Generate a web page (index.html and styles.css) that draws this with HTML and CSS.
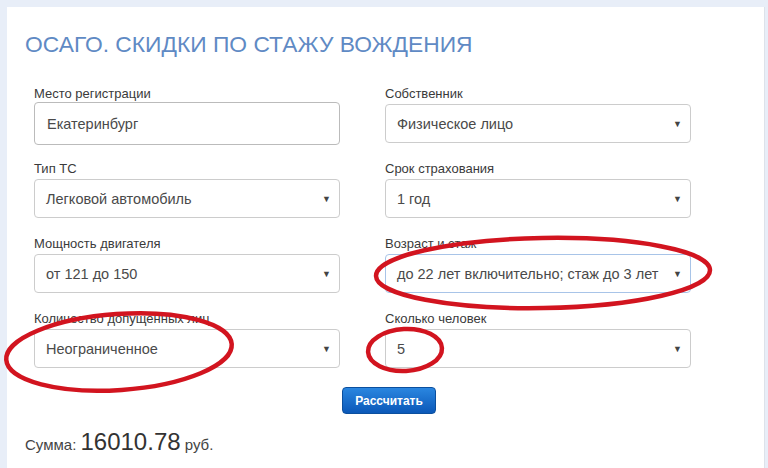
FILE: index.html
```html
<!DOCTYPE html>
<html lang="ru">

<head>
    <meta charset="UTF-8">
    <meta name="viewport" content="width=device-width, initial-scale=1.0">
    <title>ОСАГО</title>
    <link rel="stylesheet" href="styles.css">
</head>

<body>
    <div class="page">
        <div class="card">
            <h1 class="title">ОСАГО. СКИДКИ ПО СТАЖУ ВОЖДЕНИЯ</h1>

            <div class="form">
                <div class="field">
                    <div class="label">Место регистрации</div>
                    <div class="control text">Екатеринбург</div>
                </div>
                <div class="field">
                    <div class="label">Собственник</div>
                    <div class="control"><span>Физическое лицо</span><span class="arrow">▼</span></div>
                </div>
                <div class="field">
                    <div class="label">Тип ТС</div>
                    <div class="control"><span>Легковой автомобиль</span><span class="arrow">▼</span></div>
                </div>
                <div class="field">
                    <div class="label">Срок страхования</div>
                    <div class="control"><span>1 год</span><span class="arrow">▼</span></div>
                </div>
                <div class="field">
                    <div class="label">Мощность двигателя</div>
                    <div class="control"><span>от 121 до 150</span><span class="arrow">▼</span></div>
                </div>
                <div class="field">
                    <div class="label">Возраст и стаж</div>
                    <div class="control focus"><span>до 22 лет включительно; стаж до 3 лет</span><span class="arrow">▼</span></div>
                </div>
                <div class="field">
                    <div class="label">Количество допущенных лиц</div>
                    <div class="control"><span>Неограниченное</span><span class="arrow">▼</span></div>
                </div>
                <div class="field">
                    <div class="label">Сколько человек</div>
                    <div class="control"><span>5</span><span class="arrow">▼</span></div>
                </div>
            </div>

            <div class="actions">
                <button class="calc">Рассчитать</button>
            </div>

            <div class="sum">Сумма: <span class="amount">16010.78</span> руб.</div>
        </div>
    </div>

    <!-- red marker circles drawn over the form -->
    <svg class="marks" width="768" height="468" viewBox="0 0 768 468">
        <ellipse cx="543" cy="273" rx="167" ry="35" transform="rotate(-1 543 273)" />
        <ellipse cx="119" cy="352" rx="113" ry="38" transform="rotate(-4 119 352)" />
        <ellipse cx="405" cy="350" rx="37" ry="21" transform="rotate(-3 405 350)" />
    </svg>
</body>

</html>
```

FILE: styles.css
```css
body {
    margin: 0;
    background: #e8eef8;
    font-family: "Liberation Sans", Arial, sans-serif;
    color: #333;
}

.page {
    padding: 7px 3px 0 7px;
}

.card {
    background: #fff;
    border-right: 1px solid #dde2ea;
    padding: 0 0 0 18px;
    min-height: 461px;
}

.title {
    margin: 0;
    padding-top: 22px;
    font-size: 22.8px;
    line-height: 30px;
    font-weight: normal;
    color: #5f8ac4;
}

.form {
    display: grid;
    grid-template-columns: 306px 306px;
    column-gap: 45px;
    row-gap: 18px;
    margin: 27px 0 0 9px;
}

.field {
    display: flex;
    flex-direction: column;
}

.label {
    font-size: 13px;
    line-height: 16px;
    margin-bottom: 2px;
    color: #3a3a3a;
}

.control {
    height: 39px;
    box-sizing: border-box;
    border: 1px solid #ccc;
    border-radius: 4px;
    padding: 0 8px 0 11px;
    display: flex;
    align-items: center;
    justify-content: space-between;
    font-size: 14.5px;
    color: #4a4a4a;
    background: #fff;
}

.control.text {
    height: 43px;
    margin: -2px 0;
    padding-left: 12px;
    border-color: #bbb;
}

.control.focus {
    border-color: #a8c4e8;
}

.arrow {
    font-size: 9px;
    color: #444;
}

.actions {
    margin-top: 19px;
    padding-left: 317px;
}

.calc {
    width: 94px;
    height: 27px;
    border: 1px solid #0b4f9e;
    border-radius: 4px;
    background: linear-gradient(#2a86e0, #0b58b8);
    color: #fff;
    font-family: "Liberation Sans", Arial, sans-serif;
    font-size: 12px;
    font-weight: bold;
    padding: 0;
}

.sum {
    margin-top: 14px;
    font-size: 15px;
    line-height: 28px;
    color: #444;
}

.amount {
    font-size: 24px;
    color: #333;
}

.marks {
    position: absolute;
    top: 0;
    left: 0;
    pointer-events: none;
}

.marks ellipse {
    fill: none;
    stroke: #d2141f;
    stroke-width: 4.5;
}
```
